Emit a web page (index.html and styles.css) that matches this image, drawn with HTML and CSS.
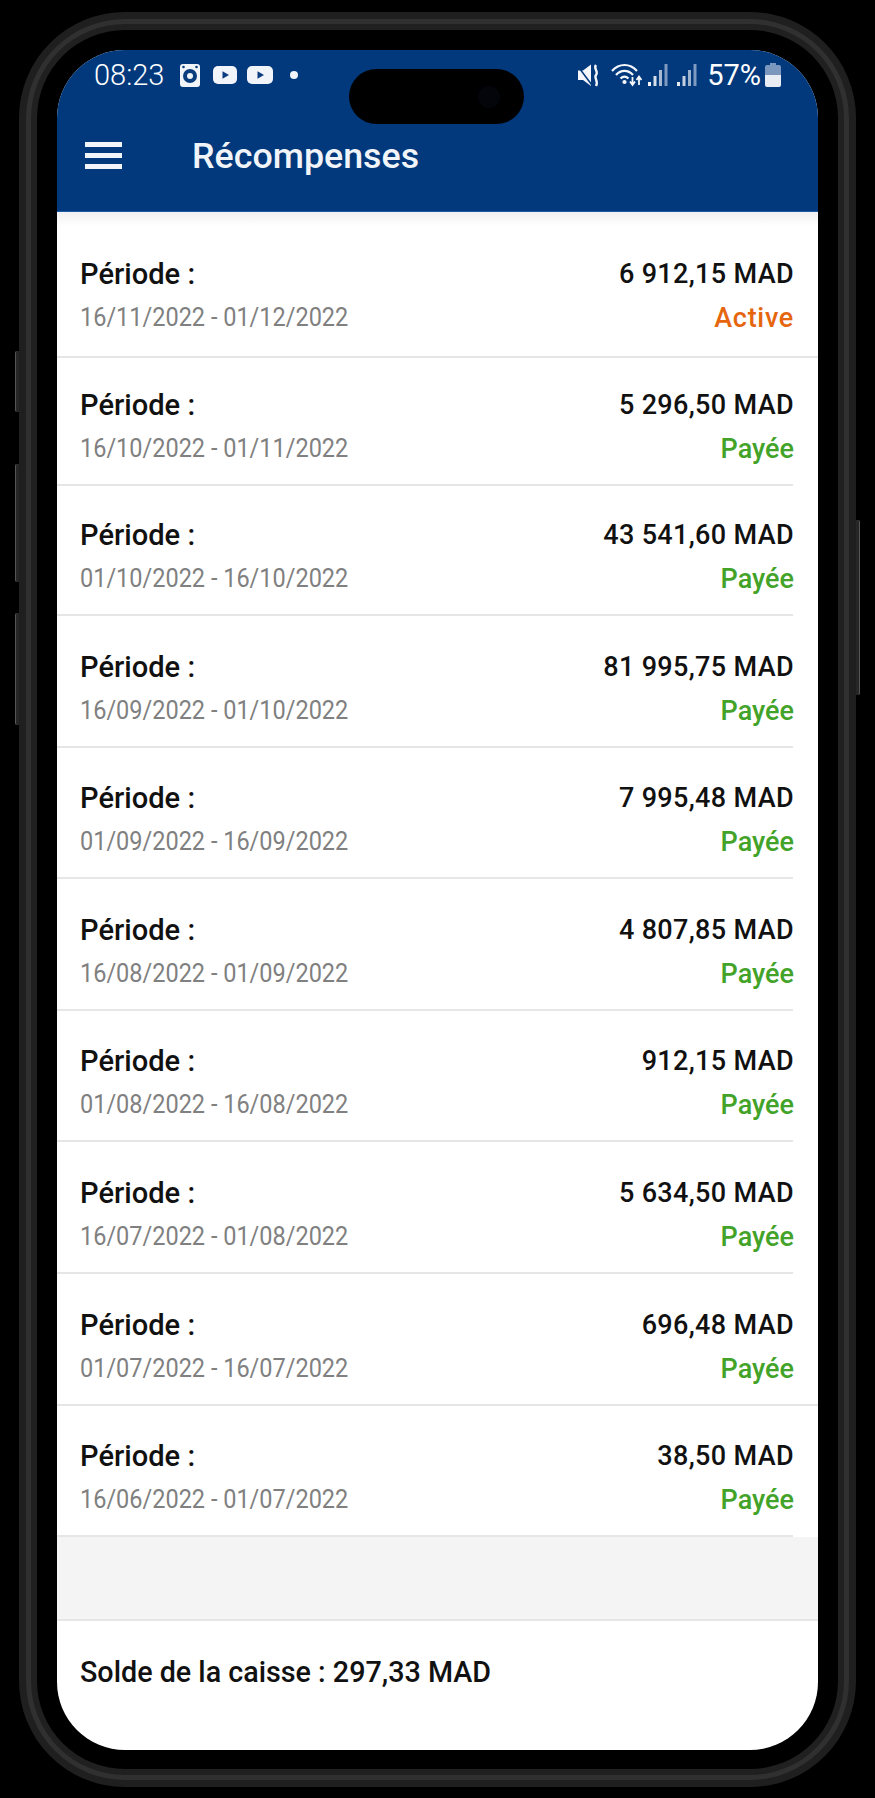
FILE: index.html
```html
<!DOCTYPE html>
<html lang="fr">
<head>
  <meta charset="UTF-8">
  <title>Récompenses</title>
  <link rel="stylesheet" href="styles.css">
</head>
<body>
  <div class="phone">
    <span class="side-btn btn-a"></span>
    <span class="side-btn btn-b"></span>
    <span class="side-btn btn-c"></span>
    <span class="side-btn btn-power"></span>

    <div class="screen">
      <div class="notch"><span class="camera"></span></div>

      <header class="header">
        <div class="status">
          <div class="status-left">
            <span class="clock">08:23</span>
            <svg class="ic-watch" width="20" height="23" viewBox="0 0 20 23">
              <rect x="0" y="0" width="20" height="23" rx="3" fill="#f1f4f9"/>
              <circle cx="3.5" cy="3" r="1.3" fill="#0a3d7e"/>
              <circle cx="16.5" cy="3" r="1.3" fill="#0a3d7e"/>
              <circle cx="10" cy="12" r="7" fill="#0a3d7e"/>
              <circle cx="10" cy="12" r="3" fill="#f1f4f9"/>
            </svg>
            <svg class="ic-yt" width="24" height="18" viewBox="0 0 24 18">
              <rect width="24" height="18" rx="5" fill="#f1f4f9"/>
              <path d="M9.5 5.2 L16 9 L9.5 12.8 Z" fill="#0a3d7e"/>
            </svg>
            <svg class="ic-yt2" width="26" height="18" viewBox="0 0 26 18">
              <rect width="26" height="18" rx="5" fill="#f1f4f9"/>
              <path d="M10.5 5.2 L17 9 L10.5 12.8 Z" fill="#0a3d7e"/>
            </svg>
            <span class="dot"></span>
          </div>
          <div class="status-right">
            <svg class="ic-mute" width="22" height="23" viewBox="0 0 22 23">
              <path d="M0 6.5 H5 L13 0.5 V22 L5 16 H0 Z" fill="#f4f6fa"/>
              <path d="M0 2.5 L15 22.5" stroke="#023a7e" stroke-width="1.6"/>
              <path d="M18 1 C15 5 21 7 18 11 C15.5 14 21 17 18 22" fill="none" stroke="#f4f6fa" stroke-width="2.4"/>
            </svg>
            <svg class="ic-wifi" width="31" height="24" viewBox="0 0 31 24">
              <path d="M1 8 C8 0 19 0 26 8" fill="none" stroke="#f4f6fa" stroke-width="2.2"/>
              <path d="M5 12 C10 6.5 17 6.5 22 12" fill="none" stroke="#f4f6fa" stroke-width="2.2"/>
              <path d="M9.5 15.5 C12 13 15 13 17.5 15.5" fill="none" stroke="#f4f6fa" stroke-width="2.2"/>
              <circle cx="13.5" cy="19" r="2.1" fill="#f4f6fa"/>
              <path d="M21.5 14 V21 M19 18.5 L21.5 22 L24 18.5" fill="none" stroke="#f4f6fa" stroke-width="1.8"/>
              <path d="M28 22 V14 M25.5 17 L28 13.5 L30.5 17" fill="none" stroke="#f4f6fa" stroke-width="1.8"/>
            </svg>
            <svg class="ic-signal" width="20" height="23" viewBox="0 0 20 23">
              <rect x="0" y="18" width="3" height="4" fill="#f4f6fa"/>
              <rect x="5.5" y="12" width="3" height="10" fill="#d5deea"/>
              <rect x="11" y="6" width="3" height="16" fill="#a9bbd3"/>
              <rect x="16.5" y="0" width="3" height="22" fill="#7f9ac0"/>
            </svg>
            <svg class="ic-signal2" width="20" height="23" viewBox="0 0 20 23">
              <rect x="0" y="18" width="3" height="4" fill="#e4e9f1"/>
              <rect x="5.5" y="12" width="3" height="10" fill="#c4d0e0"/>
              <rect x="11" y="6" width="3" height="16" fill="#9db2cd"/>
              <rect x="16.5" y="0" width="3" height="22" fill="#7f9ac0"/>
            </svg>
            <span class="battery-text">57%</span>
            <svg class="ic-battery" width="16" height="24" viewBox="0 0 16 24">
              <path d="M5 0 H11 V2 H14 Q16 2 16 4 V13 H0 V4 Q0 2 2 2 H5 Z" fill="#7b97bd"/>
              <path d="M0 12 H16 V22 Q16 24 14 24 H2 Q0 24 0 22 Z" fill="#e9edf3"/>
            </svg>
          </div>
        </div>
        <div class="toolbar">
          <div class="menu-icon"><span></span><span></span><span></span></div>
          <h1 class="title">Récompenses</h1>
        </div>
      </header>

      <ul class="list">
        <li class="row row-full">
          <div class="col"><div class="label">Période :</div><div class="dates">16/11/2022 - 01/12/2022</div></div>
          <div class="col col-right"><div class="amount">6 912,15 MAD</div><div class="state active">Active</div></div>
        </li>
        <li class="row">
          <div class="col"><div class="label">Période :</div><div class="dates">16/10/2022 - 01/11/2022</div></div>
          <div class="col col-right"><div class="amount">5 296,50 MAD</div><div class="state">Payée</div></div>
        </li>
        <li class="row">
          <div class="col"><div class="label">Période :</div><div class="dates">01/10/2022 - 16/10/2022</div></div>
          <div class="col col-right"><div class="amount">43 541,60 MAD</div><div class="state">Payée</div></div>
        </li>
        <li class="row">
          <div class="col"><div class="label">Période :</div><div class="dates">16/09/2022 - 01/10/2022</div></div>
          <div class="col col-right"><div class="amount">81 995,75 MAD</div><div class="state">Payée</div></div>
        </li>
        <li class="row">
          <div class="col"><div class="label">Période :</div><div class="dates">01/09/2022 - 16/09/2022</div></div>
          <div class="col col-right"><div class="amount">7 995,48 MAD</div><div class="state">Payée</div></div>
        </li>
        <li class="row">
          <div class="col"><div class="label">Période :</div><div class="dates">16/08/2022 - 01/09/2022</div></div>
          <div class="col col-right"><div class="amount">4 807,85 MAD</div><div class="state">Payée</div></div>
        </li>
        <li class="row">
          <div class="col"><div class="label">Période :</div><div class="dates">01/08/2022 - 16/08/2022</div></div>
          <div class="col col-right"><div class="amount">912,15 MAD</div><div class="state">Payée</div></div>
        </li>
        <li class="row">
          <div class="col"><div class="label">Période :</div><div class="dates">16/07/2022 - 01/08/2022</div></div>
          <div class="col col-right"><div class="amount">5 634,50 MAD</div><div class="state">Payée</div></div>
        </li>
        <li class="row row-full">
          <div class="col"><div class="label">Période :</div><div class="dates">01/07/2022 - 16/07/2022</div></div>
          <div class="col col-right"><div class="amount">696,48 MAD</div><div class="state">Payée</div></div>
        </li>
        <li class="row">
          <div class="col"><div class="label">Période :</div><div class="dates">16/06/2022 - 01/07/2022</div></div>
          <div class="col col-right"><div class="amount">38,50 MAD</div><div class="state">Payée</div></div>
        </li>
      </ul>

      <div class="spacer"></div>

      <footer class="footer">Solde de la caisse : 297,33 MAD</footer>
    </div>
  </div>
</body>
</html>
```

FILE: styles.css
```css
html, body {
  margin: 0;
  background: #000;
}
body {
  height: 1798px;
  padding: 30px 0 0 37px;
  box-sizing: border-box;
  overflow: hidden;
  font-family: Roboto, "Liberation Sans", sans-serif;
}

/* phone body: the metal band is drawn by stacked shadows */
.phone {
  position: relative;
  width: 801px;
  height: 1739px;
  padding: 20px 20px 19px;
  box-sizing: border-box;
  background: #000;
  border-radius: 88px;
  box-shadow: 0 0 0 6px #202020, 0 0 0 11px #303030, 0 0 0 18px #1f1f1f;
}
.side-btn {
  position: absolute;
  width: 3px;
  background: #262626;
  border-left: 1px solid #555;
  border-radius: 2px 0 0 2px;
}
.btn-a { left: -22px; top: 321px; height: 61px; }
.btn-b { left: -22px; top: 434px; height: 118px; }
.btn-c { left: -22px; top: 583px; height: 112px; }
.btn-power {
  right: -22px;
  top: 490px;
  height: 175px;
  border-left: 0;
  border-right: 1px solid #555;
  border-radius: 0 2px 2px 0;
}

.screen {
  position: relative;
  height: 100%;
  background: #fff;
  border-radius: 68px;
  overflow: hidden;
  display: flex;
  flex-direction: column;
}
.notch {
  position: absolute;
  left: 292px;
  top: 19px;
  width: 175px;
  height: 55px;
  background: #000;
  border-radius: 28px;
}
.camera {
  position: absolute;
  right: 24px;
  top: 17px;
  width: 22px;
  height: 22px;
  border-radius: 50%;
  background: #03050b;
}

/* blue header */
.header {
  height: 162px;
  flex: none;
  background: #01397c;
  border-bottom: 1px solid #1a5aa6;
  box-sizing: border-box;
  color: #fff;
}
.status {
  height: 50px;
  padding: 0 37px;
  display: flex;
  justify-content: space-between;
  align-items: center;
}
.status-left, .status-right {
  display: flex;
  align-items: center;
}
.clock {
  font-size: 29px;
  font-weight: 300;
  width: 69px;
}
.battery-text {
  font-size: 29px;
  font-weight: 400;
  margin-left: 10px;
}
.ic-watch { margin-left: 17px; }
.ic-yt { margin-left: 13px; }
.ic-yt2 { margin-left: 10px; }
.dot {
  width: 8px;
  height: 8px;
  margin-left: 17px;
  border-radius: 50%;
  background: #f1f4f9;
}
.ic-wifi { margin-left: 11px; }
.ic-signal { margin-left: 6px; }
.ic-signal2 { margin-left: 9px; }
.ic-battery { margin-left: 4px; }

.toolbar {
  height: 111px;
  padding-left: 28px;
  display: flex;
  align-items: center;
}
.menu-icon {
  width: 37px;
  display: flex;
  flex-direction: column;
  gap: 6px;
}
.menu-icon span {
  height: 5px;
  background: #f1f4f9;
}
.title {
  margin: 0 0 0 70px;
  font-size: 35.8px;
  font-weight: 500;
  color: #f1f4f9;
}

/* reward rows */
.list {
  margin: 0;
  padding: 0;
  list-style: none;
  flex: none;
  background: linear-gradient(#f0f0f0, #fff 14px);
}
.row {
  position: relative;
  height: 131.6px;
  padding: 0 24px 13px 23px;
  box-sizing: border-box;
  display: flex;
  justify-content: space-between;
  align-items: flex-end;
  border-bottom: 2px solid transparent;
}
.row::after {
  content: "";
  position: absolute;
  left: 0;
  right: 25px;
  bottom: -2px;
  height: 2px;
  background: #e6e6e6;
}
.row-full::after { right: 0; }
.row:nth-child(1) { height: 145.5px; padding-bottom: 16px; }
.row:nth-child(2) { height: 128.5px; }
.row:nth-child(3) { height: 130px; }

/* the source text is narrower than stock Roboto */
.label {
  margin-bottom: 1px;
  font-size: 30px;
  font-weight: 500;
  line-height: 42px;
  color: #111;
  transform: scaleX(0.97);
  transform-origin: left;
}
.dates {
  font-size: 25px;
  line-height: 44px;
  color: #808080;
  transform: scaleX(0.94);
  transform-origin: left;
}
.col-right { text-align: right; }
.amount {
  margin-bottom: 1px;
  font-size: 27px;
  font-weight: 500;
  line-height: 42px;
  letter-spacing: 0.35px;
  color: #111;
}
.state {
  font-size: 27px;
  font-weight: 500;
  line-height: 44px;
  color: #43a329;
}
.state.active {
  color: #e5660f;
  letter-spacing: 0.7px;
}

.spacer {
  flex: none;
  height: 82px;
  background: #f4f4f4;
  border-bottom: 2px solid #e6e6e6;
}
.footer {
  padding: 33px 24px 0;
  font-size: 30px;
  font-weight: 500;
  color: #111;
  transform: scaleX(0.957);
  transform-origin: left;
}
```
